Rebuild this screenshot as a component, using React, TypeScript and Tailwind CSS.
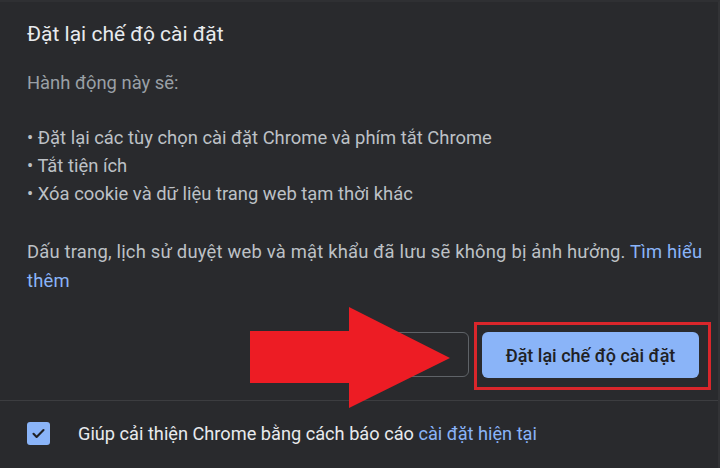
import React from 'react';

const font = { fontFamily: 'Roboto, "Noto Sans", sans-serif' };

function CheckBox() {
  return (
    <div className="w-[23px] h-[23px] rounded-[3px] bg-[#8ab4f8] flex items-center justify-center shrink-0">
      <svg width="15" height="15" viewBox="0 0 24 24" fill="none">
        <path d="M4 12.5l5 5L20 6.5" stroke="#202124" strokeWidth="3.4" strokeLinecap="round" strokeLinejoin="round" />
      </svg>
    </div>
  );
}

export default function App() {
  return (
    <div className="relative w-[720px] h-[468px] bg-[#292a2d] flex flex-col overflow-hidden border-t-2 border-t-[#2f3033] border-r-2 border-r-[#323336]" style={font}>
      {/* dialog body */}
      <div className="flex-1 flex flex-col pl-[27px] pt-[18px]">
        <h1 className="text-[21px] leading-[28px] text-[#e8eaed] font-normal">Đặt lại chế độ cài đặt</h1>
        <p className="mt-[21px] text-[18.4px] leading-[28px] text-[#9aa0a6]">Hành động này sẽ:</p>
        <ul className="mt-[27px] text-[18.4px] leading-[28px] text-[#bdc1c6]">
          <li>• Đặt lại các tùy chọn cài đặt Chrome và phím tắt Chrome</li>
          <li>• Tắt tiện ích</li>
          <li>• Xóa cookie và dữ liệu trang web tạm thời khác</li>
        </ul>
        <div className="mt-[29px] pr-[8px] text-[18.4px] leading-[29px] tracking-[0.2px] text-[#bdc1c6]">
          <p>
            Dấu trang, lịch sử duyệt web và mật khẩu đã lưu sẽ không bị ảnh hưởng.{' '}
            <a className="text-[#8ab4f8]">Tìm hiểu</a>
          </p>
          <a className="block text-[#8ab4f8]">thêm</a>
        </div>
        <div className="mt-[27px] flex justify-end items-start pr-[7px]">
          <button className="mt-[10px] w-[110px] h-[45px] rounded-[6px] border border-[#5f6368] text-[#8ab4f8] text-[17px]">Hủy</button>
          <div className="ml-[5px] border-[3px] border-[#d9262b] pl-[5px] pr-[9px] pt-[7px] pb-[9px]">
            <button className="w-[217px] h-[46px] rounded-[6px] bg-[#8ab4f8] text-[#202124] text-[18px] font-medium">Đặt lại chế độ cài đặt</button>
          </div>
        </div>
      </div>

      {/* footer */}
      <div className="h-[68px] border-t border-[#3c3d40] flex items-center pl-[27px] pb-[2px]">
        <CheckBox />
        <span className="ml-[28px] text-[18.2px] text-[#e8eaed]">
          Giúp cải thiện Chrome bằng cách báo cáo <a className="text-[#8ab4f8]">cài đặt hiện tại</a>
        </span>
      </div>

      {/* annotation arrow */}
      <svg className="absolute left-[250px] top-[305px]" width="201" height="102" viewBox="0 0 201 102">
        <polygon points="0,24 99,24 99,0 200,51 99,101 99,76 0,76" fill="#ed1c24" />
      </svg>
    </div>
  );
}
